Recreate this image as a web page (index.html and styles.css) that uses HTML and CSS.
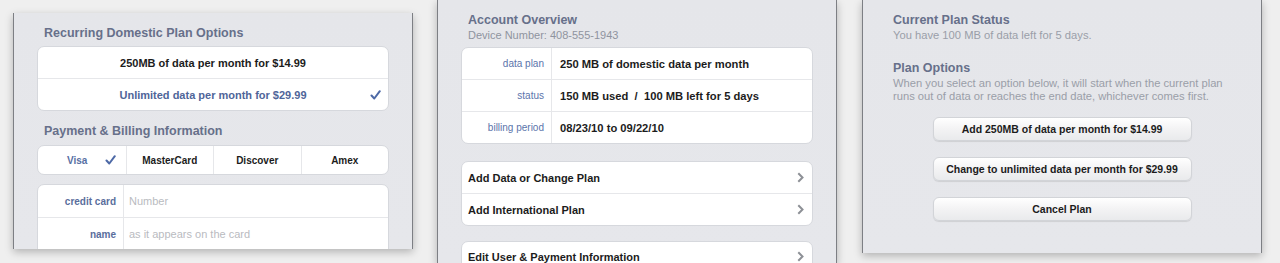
FILE: index.html
```html
<!DOCTYPE html>
<html lang="en">
<head>
    <meta charset="UTF-8">
    <meta name="viewport" content="width=device-width, initial-scale=1.0">
    <title>Data Plan Screens</title>
    <link rel="stylesheet" href="styles.css">
</head>
<body>

<div class="screen" id="planScreen">
    <div class="group-title">Recurring Domestic Plan Options</div>
    <div class="card plans">
        <div class="row center">250MB of data per month for $14.99</div>
        <div class="row center selected">Unlimited data per month for $29.99
            <svg class="check" width="11" height="10" viewBox="0 0 11 10"><path d="M1.5 5.5 L4.3 8.5 L9.8 1.2" fill="none" stroke="#4d69a6" stroke-width="2" stroke-linecap="round" stroke-linejoin="round"/></svg>
        </div>
    </div>

    <div class="group-title">Payment &amp; Billing Information</div>
    <div class="card segments">
        <div class="segment selected">Visa
            <svg width="11" height="10" viewBox="0 0 11 10"><path d="M1.5 5.5 L4.3 8.5 L9.8 1.2" fill="none" stroke="#4d69a6" stroke-width="2" stroke-linecap="round" stroke-linejoin="round"/></svg>
        </div>
        <div class="segment">MasterCard</div>
        <div class="segment">Discover</div>
        <div class="segment">Amex</div>
    </div>

    <div class="card form">
        <div class="field">
            <div class="label">credit card</div>
            <div class="value placeholder">Number</div>
        </div>
        <div class="field">
            <div class="label">name</div>
            <div class="value placeholder">as it appears on the card</div>
        </div>
        <div class="field">
            <div class="label"></div>
            <div class="value"></div>
        </div>
    </div>
</div>

<div class="screen" id="overviewScreen">
    <div class="group-title">Account Overview</div>
    <div class="group-note">Device Number: 408-555-1943</div>
    <div class="card info">
        <div class="field">
            <div class="label">data plan</div>
            <div class="value">250 MB of domestic data per month</div>
        </div>
        <div class="field">
            <div class="label">status</div>
            <div class="value">150 MB used &nbsp;/ &nbsp;100 MB left for 5 days</div>
        </div>
        <div class="field">
            <div class="label">billing period</div>
            <div class="value">08/23/10 to 09/22/10</div>
        </div>
    </div>

    <div class="card links">
        <div class="row link">Add Data or Change Plan
            <svg class="chevron" width="7" height="11" viewBox="0 0 7 11"><path d="M1.3 1.3 L5.5 5.5 L1.3 9.7" fill="none" stroke="#8d9096" stroke-width="2"/></svg>
        </div>
        <div class="row link">Add International Plan
            <svg class="chevron" width="7" height="11" viewBox="0 0 7 11"><path d="M1.3 1.3 L5.5 5.5 L1.3 9.7" fill="none" stroke="#8d9096" stroke-width="2"/></svg>
        </div>
    </div>

    <div class="card links last">
        <div class="row link">Edit User &amp; Payment Information
            <svg class="chevron" width="7" height="11" viewBox="0 0 7 11"><path d="M1.3 1.3 L5.5 5.5 L1.3 9.7" fill="none" stroke="#8d9096" stroke-width="2"/></svg>
        </div>
    </div>
</div>

<div class="screen" id="statusScreen">
    <div class="group-title">Current Plan Status</div>
    <div class="group-note">You have 100 MB of data left for 5 days.</div>

    <div class="group-title spaced">Plan Options</div>
    <div class="group-note">When you select an option below, it will start when the current plan runs out of data or reaches the end date, whichever comes first.</div>

    <div class="buttons">
        <button>Add 250MB of data per month for $14.99</button>
        <button>Change to unlimited data per month for $29.99</button>
        <button>Cancel Plan</button>
    </div>
</div>

</body>
</html>
```

FILE: styles.css
```css
body {
    font-family: 'Liberation Sans', Arial, sans-serif;
    margin: 0;
    height: 263px;
    overflow: hidden;
    background-color: #efefef;
    display: flex;
    align-items: flex-start;
    gap: 24px;
    padding-left: 13px;
}

.screen {
    width: 400px;
    flex: none;
    box-sizing: border-box;
    background: linear-gradient(#e5e6ea, #e6e7eb);
    border-left: 1px solid #7d7f84;
    border-right: 1px solid #7d7f84;
    box-shadow: 0 3px 8px rgba(0, 0, 0, 0.25);
    padding: 13px 23px 0 23px;
}

#planScreen {
    margin-top: 13px;
    height: 236px;
    overflow: hidden;
}

#overviewScreen {
    height: 263px;
    overflow: hidden;
}

#statusScreen {
    height: 253px;
    margin-left: 1px;
}

.group-title {
    font-size: 12.5px;
    font-weight: bold;
    color: #67708a;
    padding-left: 7px;
    line-height: 15px;
}

.group-note {
    font-size: 11px;
    color: #8f949f;
    padding-left: 7px;
    line-height: 13px;
    margin-top: 1px;
}

#statusScreen .group-note {
    font-size: 11.2px;
    color: #9a9ea8;
}

.card {
    background-color: white;
    border: 1px solid #d6d8dd;
    border-radius: 7px;
    margin-top: 5px;
    margin-bottom: 13px;
    overflow: hidden;
}

.row {
    height: 31px;
    display: flex;
    align-items: center;
    font-size: 11px;
    font-weight: bold;
    color: #1c1c1c;
    border-top: 1px solid #e6e7ea;
    position: relative;
}

.row:first-child {
    border-top: none;
}

.row.center {
    justify-content: center;
}

.row.selected {
    color: #4f6599;
}

.row .check {
    position: absolute;
    right: 7px;
}

.segments {
    display: grid;
    grid-template-columns: repeat(4, 1fr);
    height: 28px;
    margin-top: 6px;
    margin-bottom: 9px;
}

.segment {
    display: flex;
    align-items: center;
    justify-content: center;
    font-size: 10px;
    font-weight: bold;
    color: #1c1c1c;
    border-left: 1px solid #e6e7ea;
}

.segment:first-child {
    border-left: none;
}

.segment.selected {
    color: #5870a4;
    justify-content: space-between;
    padding: 0 10px 0 29px;
}

.field {
    display: flex;
    height: 32px;
    border-top: 1px solid #e6e7ea;
}

.field:first-child {
    border-top: none;
}

.label {
    box-sizing: border-box;
    width: 86px;
    flex: none;
    padding-right: 7px;
    border-right: 1px solid #e6e7ea;
    font-size: 10px;
    font-weight: bold;
    color: #5a6e9c;
    display: flex;
    align-items: center;
    justify-content: flex-end;
}

.value {
    display: flex;
    align-items: center;
    padding-left: 5px;
    font-size: 11px;
}

.placeholder {
    color: #b9bbbf;
}

.form {
    margin-top: 9px;
}

.info {
    margin-top: 5px;
    margin-bottom: 17px;
}

.info .field {
    height: 31px;
}

.info .label {
    width: 90px;
    font-weight: normal;
    color: #5b74ab;
    padding-right: 7px;
}

.info .value {
    font-size: 11.2px;
    font-weight: bold;
    color: #1c1c1c;
    padding-left: 8px;
}

.links {
    margin-top: 0;
    margin-bottom: 15px;
}

.links.last {
    margin-bottom: 0;
}

.row.link {
    padding-left: 6px;
    padding-right: 8px;
    justify-content: space-between;
}

.links.last .row.link {
    height: 29px;
    padding-bottom: 2px;
}

.spaced {
    margin-top: 19px;
}

.buttons {
    display: flex;
    flex-direction: column;
    align-items: center;
    gap: 16px;
    margin-top: 14px;
}

button {
    width: 259px;
    height: 24px;
    font-family: 'Liberation Sans', Arial, sans-serif;
    font-size: 10.5px;
    font-weight: bold;
    color: #1c1c1c;
    border: 1px solid #d2d4d8;
    border-radius: 6px;
    background: linear-gradient(#ffffff, #f3f3f4 50%, #e9eaec);
    box-shadow: 0 1px 1px rgba(0, 0, 0, 0.1);
}
```
